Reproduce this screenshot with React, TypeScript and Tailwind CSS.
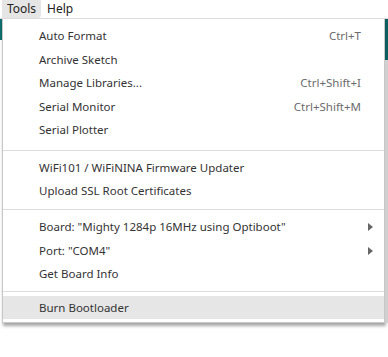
import React from "react";

type Item = { label: string; shortcut?: string; submenu?: boolean; active?: boolean };

const groups: Item[][] = [
  [
    { label: "Auto Format", shortcut: "Ctrl+T" },
    { label: "Archive Sketch" },
    { label: "Manage Libraries...", shortcut: "Ctrl+Shift+I" },
    { label: "Serial Monitor", shortcut: "Ctrl+Shift+M" },
    { label: "Serial Plotter" },
  ],
  [{ label: "WiFi101 / WiFiNINA Firmware Updater" }, { label: "Upload SSL Root Certificates" }],
  [
    { label: 'Board: "Mighty 1284p 16MHz using Optiboot"', submenu: true },
    { label: 'Port: "COM4"', submenu: true },
    { label: "Get Board Info" },
  ],
  [{ label: "Burn Bootloader", active: true }],
];

// separator margins measured from the screenshot
const seps = ["mt-[8px] mb-[5px]", "mt-[6.5px] mb-[5px]", "mt-[5px] mb-[4px]"];

function Row({ item }: { item: Item }) {
  return (
    <div
      className={`flex items-center pl-[36px] pr-[23px] ${
        item.active ? "h-[23px] bg-[#e6e6e6]" : "h-[23.5px]"
      }`}
    >
      <span className="flex-1 text-[#333333]">{item.label}</span>
      {item.shortcut && <span className="text-[#6b6b6b]">{item.shortcut}</span>}
      {item.submenu && (
        <svg width="5" height="8" viewBox="0 0 5 8" className="mr-[-12px]">
          <path d="M0 0 L5 4 L0 8 Z" fill="#666666" />
        </svg>
      )}
    </div>
  );
}

export default function App() {
  return (
    <div
      className="w-[388px] h-[357px] bg-white overflow-hidden text-[11.5px]"
      style={{ fontFamily: '"Noto Sans", "Open Sans", sans-serif' }}
    >
      <div className="h-[19px] flex items-stretch border-b border-[#dcdcdc] text-[12px]">
        <div className="ml-[2px] w-[39px] bg-[#e5e5e5] rounded-br-[3px] flex items-center justify-center text-[#222]">
          Tools
        </div>
        <div className="px-[6px] flex items-center text-[#222]">Help</div>
      </div>
      <div className="flex">
        <div className="w-[2px] flex flex-col">
          <div className="h-[21px] bg-[#0e6e6e]" />
          <div className="flex-1" />
        </div>
        <div className="w-[383px] flex flex-col">
          <div className="bg-white border-l border-r border-b border-[#c8c8c8] shadow-[1px_3px_3px_rgba(0,0,0,0.35)] pt-[5.25px] pb-[3px]">
            {groups.map((g, gi) => (
              <div key={gi}>
                {gi > 0 && <div className={`${seps[gi - 1]} h-px bg-[#dddddd]`} />}
                {g.map((it) => (
                  <Row key={it.label} item={it} />
                ))}
              </div>
            ))}
          </div>
          <div className="flex-1 ml-[4px] border-l border-[#f2f2f2]" />
        </div>
        <div className="w-[3px] flex flex-col">
          <div className="h-[41px] bg-[#0b5f5f]" />
          <div className="flex-1 bg-[#d0d0d0]" />
        </div>
      </div>
    </div>
  );
}
